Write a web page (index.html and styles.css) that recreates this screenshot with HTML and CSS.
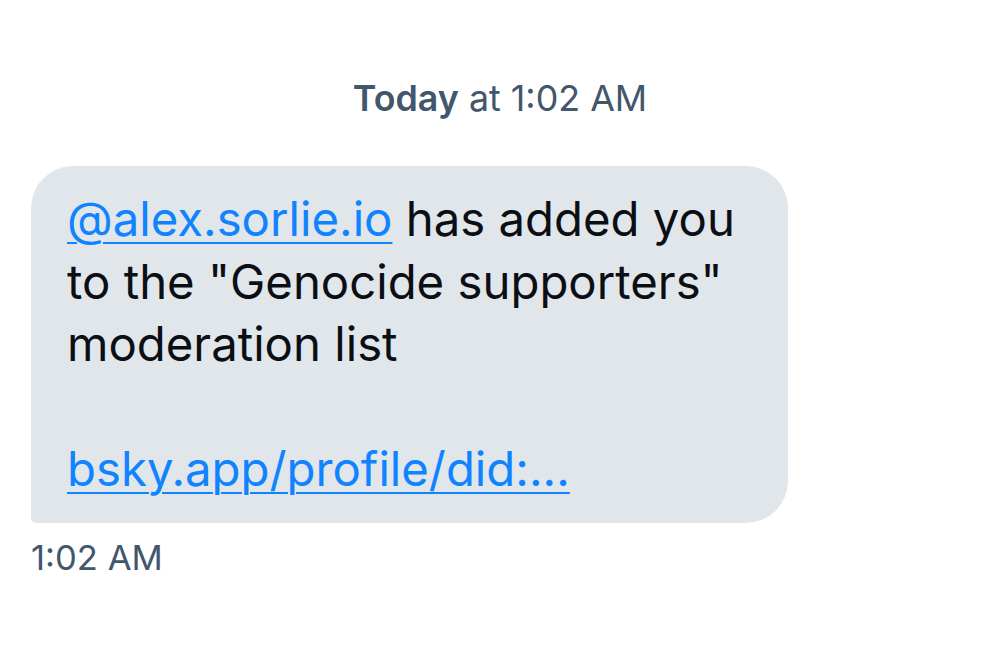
FILE: index.html
```html
<!DOCTYPE html>
<html>
<head>
<meta charset="utf-8">
<link rel="stylesheet" href="styles.css">
</head>
<body>
<div class="chat">
  <div class="date"><strong>Today</strong> at 1:02 AM</div>
  <div class="msg">
    <div class="bubble">
      <a class="link" href="#">@alex.sorlie.io</a> has added you to the "Genocide supporters" moderation list<br><br><a class="link" href="#">bsky.app/profile/did:...</a>
    </div>
    <div class="time">1:02 AM</div>
  </div>
</div>
</body>
</html>
```
FILE: styles.css
```css
html, body {
  margin: 0;
  padding: 0;
  background: #ffffff;
}
body {
  font-family: Inter, "Noto Sans", sans-serif;
  width: 1000px;
  height: 661px;
  overflow: hidden;
}
.chat {
  display: flex;
  flex-direction: column;
  padding: 76px 0 0 31px;
}
.date {
  text-align: center;
  margin-left: -31px;
  font-size: 35.8px;
  line-height: 44px;
  color: #42566c;
}
.date strong {
  font-weight: 600;
}
.msg {
  margin-top: 46px;
  display: flex;
  flex-direction: column;
  align-items: flex-start;
}
.bubble {
  box-sizing: border-box;
  width: 757px;
  background: #e1e6eb;
  border-radius: 42px 42px 42px 5px;
  padding: 22px 34px 22px 36px;
  font-size: 47.3px;
  line-height: 62.5px;
  color: #0b0f14;
}
.link {
  color: #1083fe;
  text-decoration: underline;
  text-decoration-thickness: 2px;
  text-underline-offset: 6px;
}
.time {
  margin-top: 12px;
  font-size: 34.6px;
  line-height: 44px;
  color: #42566c;
}
```
